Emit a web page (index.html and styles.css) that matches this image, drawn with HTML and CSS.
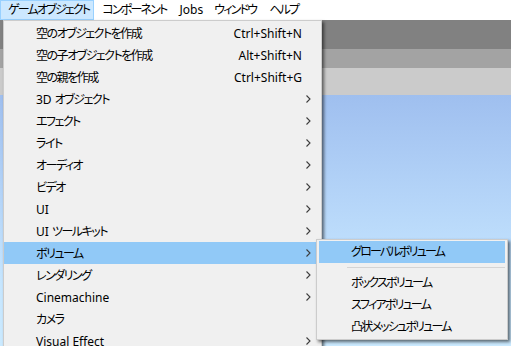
FILE: index.html
```html
<!DOCTYPE html>
<html lang="ja">
<head>
<meta charset="utf-8">
<link rel="stylesheet" href="styles.css">
</head>
<body>
<div class="menubar">
  <div class="mb-item active">ゲームオブジェクト</div>
  <div class="mb-item">コンポーネント</div>
  <div class="mb-item en">Jobs</div>
  <div class="mb-item">ウィンドウ</div>
  <div class="mb-item">ヘルプ</div>
</div>
<div class="workspace">
  <div class="band b1"></div>
  <div class="band b2"></div>
  <div class="band b3"></div>
  <div class="sky"></div>
</div>

<div class="menu">
  <div class="row"><span class="label">空のオブジェクトを作成</span><span class="key">Ctrl+Shift+N</span><span class="arrow"></span></div>
  <div class="row"><span class="label">空の子オブジェクトを作成</span><span class="key">Alt+Shift+N</span><span class="arrow"></span></div>
  <div class="row"><span class="label">空の親を作成</span><span class="key">Ctrl+Shift+G</span><span class="arrow"></span></div>
  <div class="row"><span class="label"><span class="en">3D </span>オブジェクト</span><span class="key"></span><span class="arrow"><svg width="5" height="8" viewBox="0 0 5 8"><polyline points="0.5,0.5 4,4 0.5,7.5" fill="none" stroke="#3c3c3c" stroke-width="1.1"/></svg></span></div>
  <div class="row"><span class="label">エフェクト</span><span class="key"></span><span class="arrow"><svg width="5" height="8" viewBox="0 0 5 8"><polyline points="0.5,0.5 4,4 0.5,7.5" fill="none" stroke="#3c3c3c" stroke-width="1.1"/></svg></span></div>
  <div class="row"><span class="label">ライト</span><span class="key"></span><span class="arrow"><svg width="5" height="8" viewBox="0 0 5 8"><polyline points="0.5,0.5 4,4 0.5,7.5" fill="none" stroke="#3c3c3c" stroke-width="1.1"/></svg></span></div>
  <div class="row"><span class="label">オーディオ</span><span class="key"></span><span class="arrow"><svg width="5" height="8" viewBox="0 0 5 8"><polyline points="0.5,0.5 4,4 0.5,7.5" fill="none" stroke="#3c3c3c" stroke-width="1.1"/></svg></span></div>
  <div class="row"><span class="label">ビデオ</span><span class="key"></span><span class="arrow"><svg width="5" height="8" viewBox="0 0 5 8"><polyline points="0.5,0.5 4,4 0.5,7.5" fill="none" stroke="#3c3c3c" stroke-width="1.1"/></svg></span></div>
  <div class="row"><span class="label en">UI</span><span class="key"></span><span class="arrow"><svg width="5" height="8" viewBox="0 0 5 8"><polyline points="0.5,0.5 4,4 0.5,7.5" fill="none" stroke="#3c3c3c" stroke-width="1.1"/></svg></span></div>
  <div class="row"><span class="label"><span class="en">UI </span>ツールキット</span><span class="key"></span><span class="arrow"><svg width="5" height="8" viewBox="0 0 5 8"><polyline points="0.5,0.5 4,4 0.5,7.5" fill="none" stroke="#3c3c3c" stroke-width="1.1"/></svg></span></div>
  <div class="row selected"><span class="label">ボリューム</span><span class="key"></span><span class="arrow"><svg width="5" height="8" viewBox="0 0 5 8"><polyline points="0.5,0.5 4,4 0.5,7.5" fill="none" stroke="#3c3c3c" stroke-width="1.1"/></svg></span></div>
  <div class="row"><span class="label">レンダリング</span><span class="key"></span><span class="arrow"><svg width="5" height="8" viewBox="0 0 5 8"><polyline points="0.5,0.5 4,4 0.5,7.5" fill="none" stroke="#3c3c3c" stroke-width="1.1"/></svg></span></div>
  <div class="row"><span class="label en">Cinemachine</span><span class="key"></span><span class="arrow"><svg width="5" height="8" viewBox="0 0 5 8"><polyline points="0.5,0.5 4,4 0.5,7.5" fill="none" stroke="#3c3c3c" stroke-width="1.1"/></svg></span></div>
  <div class="row"><span class="label">カメラ</span><span class="key"></span><span class="arrow"></span></div>
  <div class="row"><span class="label en">Visual Effect</span><span class="key"></span><span class="arrow"><svg width="5" height="8" viewBox="0 0 5 8"><polyline points="0.5,0.5 4,4 0.5,7.5" fill="none" stroke="#3c3c3c" stroke-width="1.1"/></svg></span></div>
</div>

<div class="submenu">
  <div class="srow selected">グローバルボリューム</div>
  <div class="sep"></div>
  <div class="srow">ボックスボリューム</div>
  <div class="srow">スフィアボリューム</div>
  <div class="srow">凸状メッシュボリューム</div>
</div>
</body>
</html>
```

FILE: styles.css
```css
html, body {
  margin: 0;
  padding: 0;
}
body {
  width: 511px;
  height: 346px;
  overflow: hidden;
  position: relative;
  background: #ffffff;
  font-family: "Noto Sans", "Noto Sans CJK JP", sans-serif;
  font-size: 12px;
  font-feature-settings: "palt";
  color: #000000;
  display: flex;
  flex-direction: column;
}

.menubar {
  display: flex;
  height: 20px;
  background: #ffffff;
  flex: none;
}
.mb-item {
  height: 18px;
  line-height: 18px;
  padding: 0 4px 0 7px;
  border: 1px solid transparent;
  white-space: nowrap;
  letter-spacing: -1.8px;
}
.mb-item.active {
  background: #cce8ff;
  border-color: #99d1ff;
}
.mb-item.en {
  letter-spacing: 0;
  padding-right: 2px;
}

.en {
  letter-spacing: 0;
}

.workspace {
  flex: 1;
  display: flex;
  flex-direction: column;
}
.band { flex: none; }
.b1 { height: 29px; background: #818181; }
.b2 { height: 19px; background: #a3a3a3; }
.b3 { height: 27px; background: #cbcbcb; }
.sky {
  flex: 1;
  background: linear-gradient(180deg, #9fbfef 0%, #b4d4f8 40%, #c6e6ff 75%, #cbeaff 100%);
}

.menu {
  position: absolute;
  left: 3px;
  top: 20px;
  width: 315px;
  padding: 1px 2px 1px 0;
  background: #f0f0f0;
  border: 1px solid #cccccc;
  box-shadow: 2px 2px 3px rgba(0, 0, 0, 0.55);
}
.row {
  display: flex;
  align-items: center;
  height: 22px;
  white-space: nowrap;
}
.row.selected {
  background: #91c9f7;
}
.label {
  flex: 1;
  padding-left: 32px;
  letter-spacing: -1.5px;
}
.label.en {
  letter-spacing: 0;
}
.key {
  text-align: right;
}
.arrow {
  width: 17px;
  flex: none;
  display: flex;
  justify-content: flex-end;
  padding-right: 8px;
  box-sizing: border-box;
}
.arrow svg { display: block; }

.submenu {
  position: absolute;
  left: 316px;
  top: 239px;
  width: 186px;
  padding: 1px 2px;
  background: #f0f0f0;
  border: 1px solid #cccccc;
  box-shadow: 2px 2px 3px rgba(0, 0, 0, 0.55);
}
.srow {
  height: 22px;
  line-height: 22px;
  padding-left: 32px;
  white-space: nowrap;
  letter-spacing: -1.8px;
}
.srow.selected {
  background: #91c9f7;
}
.sep {
  height: 9px;
  display: flex;
  align-items: center;
  padding-left: 28px;
}
.sep::after {
  content: "";
  flex: 1;
  height: 1px;
  background: #d4d4d4;
}
```
